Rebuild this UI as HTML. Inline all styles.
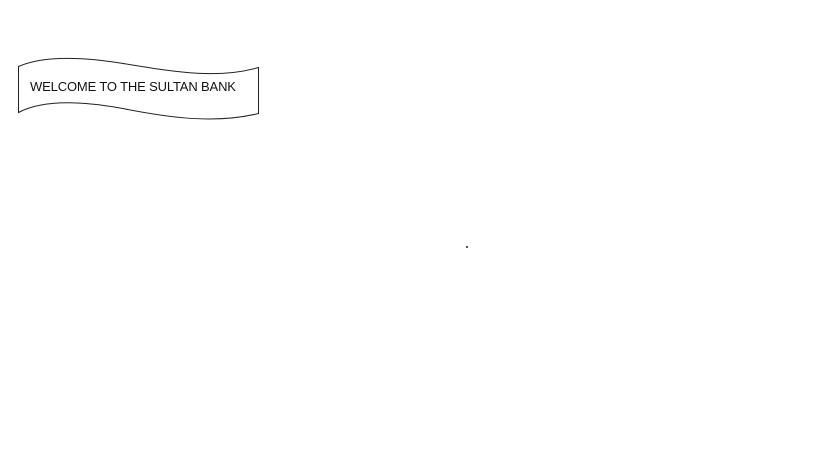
<!DOCTYPE html>
<html><head><style>
body{margin:0;width:819px;height:460px;background:#fff;overflow:hidden;position:relative}
svg{position:absolute;left:0;top:0}
.t{position:absolute;left:30px;top:79px;font:13px "Liberation Sans",sans-serif;color:#111;letter-spacing:-0.15px}
</style></head><body>
<svg width="819" height="460">
<path d="M18.5 66.5 C40 57 75 56 120 63 C170 71 215 80 258.5 67.5 L258.5 113.5 C215 124 170 118 120 108 C75 100 40 101 18.5 112.5 Z" fill="none" stroke="#222" stroke-width="1"/>
<rect x="466" y="246" width="2" height="2" fill="#555"/>
</svg>
<div class="t">WELCOME TO THE SULTAN BANK</div>
</body></html>
